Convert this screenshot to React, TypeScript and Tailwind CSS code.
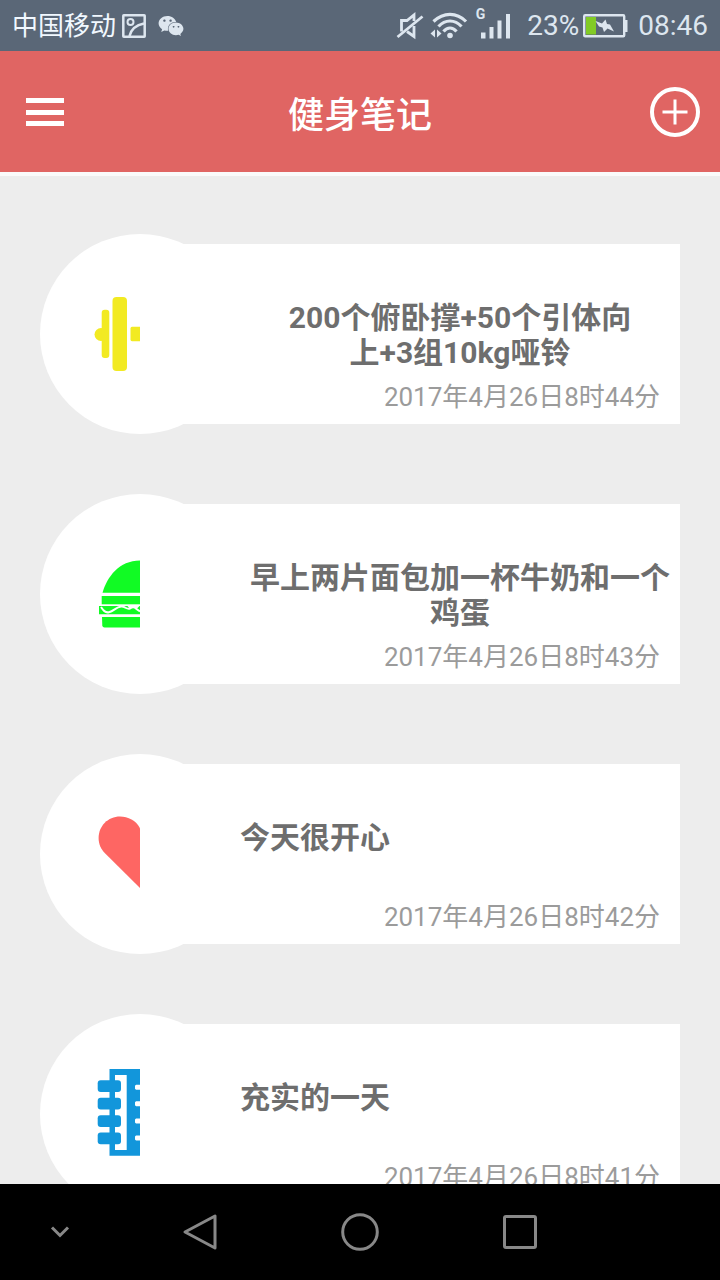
import React from "react";
import { FaWeixin } from "react-icons/fa";

const FONT = "font-[Roboto,'Noto_Sans_CJK_SC',sans-serif]";

function DumbbellIcon() {
  return (
    <svg viewBox="0 0 50 100" className="h-[100px] w-[50px]" fill="#f2ea22" aria-hidden="true">
      <circle cx="11" cy="50.5" r="6.5" />
      <rect x="11.7" y="25.7" width="7.6" height="48.3" rx="3" />
      <rect x="22.5" y="13" width="14.5" height="74" rx="4" />
      <path d="M42 42.7H50V57.3H42Q40.5 57.3 40.5 55.5V44.5Q40.5 42.7 42 42.7Z" />
    </svg>
  );
}

function BurgerIcon() {
  return (
    <svg viewBox="0 0 50 100" className="h-[100px] w-[50px]" fill="#11fb24" aria-hidden="true">
      <path d="M12.5 48.8C17 33 29 16.5 50 16.5V48.8Z" />
      <rect x="11.7" y="52" width="38.3" height="8.3" />
      <path d="M9 62H50V70.3H9Z" />
      <path
        d="M11 63C13 66 15 69.2 19 68.2C24 67 26 63 31 62.5C35 62 36.5 66 40 64.5C42.5 62.5 44.5 62.5 46.5 65L50 67.5"
        fill="none"
        stroke="#fff"
        strokeWidth="2"
      />
      <path d="M37 61.5L40 65L43 63L46 65.5L50 61.5Z" fill="#fff" />
      <path d="M12 73H50V83.5H14.5Q12.5 83.5 12.3 81.5Z" />
    </svg>
  );
}

function HeartIcon() {
  return (
    <svg viewBox="0 0 50 100" className="h-[100px] w-[50px]" fill="#fe6663" aria-hidden="true">
      <path d="M50 24.2C46 16.5 38 12.5 30 12.5C18 12.5 8.6 22 8.6 34C8.6 40 11 45.3 15 49.3L50 84Z" />
    </svg>
  );
}

function SpineIcon() {
  return (
    <svg viewBox="0 0 50 100" className="h-[100px] w-[50px]" fill="#1296db" aria-hidden="true">
      <path
        fillRule="evenodd"
        d="M19.5 5H50V20.8H46L45 21.8V24.8L46 25.8H50V37.3H46L45 38.3V41.3L46 42.3H50V54.5H46L45 55.5V58.5L46 59.5H50V71.5H46L45 72.5V75.5L46 76.5H50V91.7H19.5ZM25 11V86H36.7V11Z"
      />
      <rect x="7.7" y="16.3" width="23.3" height="11.7" rx="3" />
      <rect x="7.7" y="33.7" width="23.3" height="11.7" rx="3" />
      <rect x="7.7" y="51.3" width="23.3" height="11.7" rx="3" />
      <rect x="7.7" y="68.5" width="23.3" height="11.7" rx="3" />
    </svg>
  );
}

interface Note {
  lines: string[];
  date: string;
  Icon: () => React.JSX.Element;
}

const notes: Note[] = [
  { lines: ["200个俯卧撑+50个引体向", "上+3组10kg哑铃"], date: "2017年4月26日8时44分", Icon: DumbbellIcon },
  { lines: ["早上两片面包加一杯牛奶和一个", "鸡蛋"], date: "2017年4月26日8时43分", Icon: BurgerIcon },
  { lines: ["今天很开心"], date: "2017年4月26日8时42分", Icon: HeartIcon },
  { lines: ["充实的一天"], date: "2017年4月26日8时41分", Icon: SpineIcon },
];

function StatusBar() {
  return (
    <div className="flex h-[51px] shrink-0 items-center justify-between bg-[#5a6777] px-3 text-[#dde6ef]">
      <div className="flex items-center">
        <span className="text-[26px] leading-8 text-[#f1f8ff]">中国移动</span>
        <svg viewBox="0 0 24 24" className="ml-1.5 size-6" fill="none" stroke="currentColor" strokeWidth="2.5" aria-hidden="true">
          <rect x="1.3" y="1.3" width="21.4" height="21.4" rx="0.5" />
          <circle cx="8.5" cy="8" r="3" strokeWidth="2" />
          <path d="M7.5 22C9 16 14 11 22 9.5" />
        </svg>
        <FaWeixin className="ml-3 size-[26px]" aria-hidden="true" />
      </div>
      <div className="flex items-center">
        <svg viewBox="0 0 28 28" className="size-7" fill="none" stroke="currentColor" strokeWidth="2.8" aria-hidden="true">
          <path d="M5.5 19.5V8.5H11L18 3V9" />
          <path d="M18 14V24.5L11 19.5" />
          <path d="M1.5 25L26.5 4.5" />
        </svg>
        <svg viewBox="0 0 38 28" className="ml-1.5 h-7 w-[38px]" fill="none" stroke="currentColor" strokeWidth="3.2" aria-hidden="true">
          <path d="M3.5 9.5Q11 2.3 20 2.3T36 9.5" />
          <path d="M8.5 14.5Q13.5 9 20 9T31.5 14.5" />
          <path d="M13.5 19.5Q16.5 16 20 16T26.5 19.5" />
          <circle cx="20" cy="23.5" r="2.8" fill="currentColor" stroke="none" />
          <path d="M5 17.5V25.5L0.5 21.5ZM7 17.5V25.5L11.5 21.5Z" fill="currentColor" stroke="none" />
        </svg>
        <div className="ml-2 flex items-start">
          <span className="-mt-1 -mr-1 text-[14px] leading-3 font-bold">G</span>
          <svg viewBox="0 0 30 28" className="h-7 w-[30px]" fill="currentColor" aria-hidden="true">
            <rect x="0" y="20.5" width="4.5" height="6" />
            <rect x="8.5" y="15" width="4" height="11.5" />
            <rect x="16.5" y="8.5" width="4" height="18" />
            <rect x="25" y="2" width="4" height="24.5" />
          </svg>
        </div>
        <span className="ml-4 text-[28px] leading-8">23%</span>
        <svg viewBox="0 0 45 24" className="ml-1 h-6 w-[45px]" aria-hidden="true">
          <rect x="1.2" y="1.2" width="40" height="21" rx="1" fill="none" stroke="currentColor" strokeWidth="2.4" />
          <rect x="3" y="3" width="10" height="17.5" fill="#82cb25" />
          <path d="M42 6H44.5V18H42Z" fill="currentColor" />
          <path d="M12.5 7L19 9.5L22.5 5.5L24 10L27 10.5L31 17.5L24.5 14.5L21 18L19.5 13.5L16 12.5Z" fill="currentColor" />
        </svg>
        <span className="ml-2.5 text-[28px] leading-8">08:46</span>
      </div>
    </div>
  );
}

function Header() {
  return (
    <header className="grid h-[125px] shrink-0 grid-cols-[1fr_auto_1fr] items-center border-b-4 border-[#fafafa] bg-[#e06563] px-5 text-white">
      <button type="button" aria-label="菜单" className="ml-1.5 justify-self-start">
        <svg viewBox="0 0 38 28" className="h-7 w-[38px]" fill="currentColor" aria-hidden="true">
          <path d="M0 0H38V5H0ZM0 12H38V17H0ZM0 23H38V28H0Z" />
        </svg>
      </button>
      <h1 className="pt-2 text-[36px] leading-10 font-medium">健身笔记</h1>
      <button type="button" aria-label="添加" className="justify-self-end">
        <svg viewBox="0 0 50 50" className="size-[50px]" fill="none" stroke="currentColor" aria-hidden="true">
          <circle cx="25" cy="25" r="23" strokeWidth="4" />
          <path d="M12.5 25H37.5M25 12.5V37.5" strokeWidth="3" />
        </svg>
      </button>
    </header>
  );
}

function NoteItem({ lines, date, Icon }: Note) {
  return (
    <li className="flex items-center">
      <div className="flex size-[200px] shrink-0 items-center rounded-full bg-white pl-[50px]">
        <Icon />
      </div>
      <article className="-ml-[100px] flex h-[180px] min-w-0 flex-1 flex-col justify-between bg-white pt-14 pb-3 pl-[100px]">
        <h2 className={`text-[30px] leading-[35px] font-bold text-[#6e6e6e] ${lines.length > 1 ? "text-center" : "text-left"}`}>
          {lines.map((line) => (
            <span key={line} className="block">
              {line}
            </span>
          ))}
        </h2>
        <time className="pr-5 text-right text-[26px] leading-[30px] text-[#9b9b9b]">{date}</time>
      </article>
    </li>
  );
}

function NavigationBar() {
  const button = "flex h-full w-full items-center justify-center";
  return (
    <nav className="grid h-24 shrink-0 grid-cols-[3fr_4fr_4fr_4fr_3fr] bg-black text-[#888888]">
      <button type="button" aria-label="隐藏" className={button}>
        <svg viewBox="0 0 20 14" className="h-3.5 w-5" fill="none" stroke="currentColor" strokeWidth="3" aria-hidden="true">
          <path d="M2 2.5L10 10.5L18 2.5" />
        </svg>
      </button>
      <button type="button" aria-label="返回" className={button}>
        <svg viewBox="0 0 36 40" className="h-10 w-9" fill="none" stroke="currentColor" strokeWidth="3" strokeLinejoin="round" aria-hidden="true">
          <path d="M33 4V36L3 20Z" />
        </svg>
      </button>
      <button type="button" aria-label="主页" className={button}>
        <svg viewBox="0 0 40 40" className="size-10" fill="none" stroke="currentColor" strokeWidth="3" aria-hidden="true">
          <circle cx="20" cy="20" r="17.3" />
        </svg>
      </button>
      <button type="button" aria-label="最近任务" className={button}>
        <svg viewBox="0 0 36 36" className="size-9" fill="none" stroke="currentColor" strokeWidth="3" aria-hidden="true">
          <rect x="2.5" y="2.5" width="31" height="31" rx="1.5" />
        </svg>
      </button>
    </nav>
  );
}

export default function App() {
  return (
    <div className={`flex h-screen flex-col bg-[#ededed] ${FONT}`}>
      <StatusBar />
      <Header />
      <main className="min-h-0 flex-1 overflow-y-auto [scrollbar-width:none]">
        <ul className="flex flex-col gap-[60px] px-10 pt-[58px] pb-10">
          {notes.map((note) => (
            <NoteItem key={note.date} {...note} />
          ))}
        </ul>
      </main>
      <NavigationBar />
    </div>
  );
}
